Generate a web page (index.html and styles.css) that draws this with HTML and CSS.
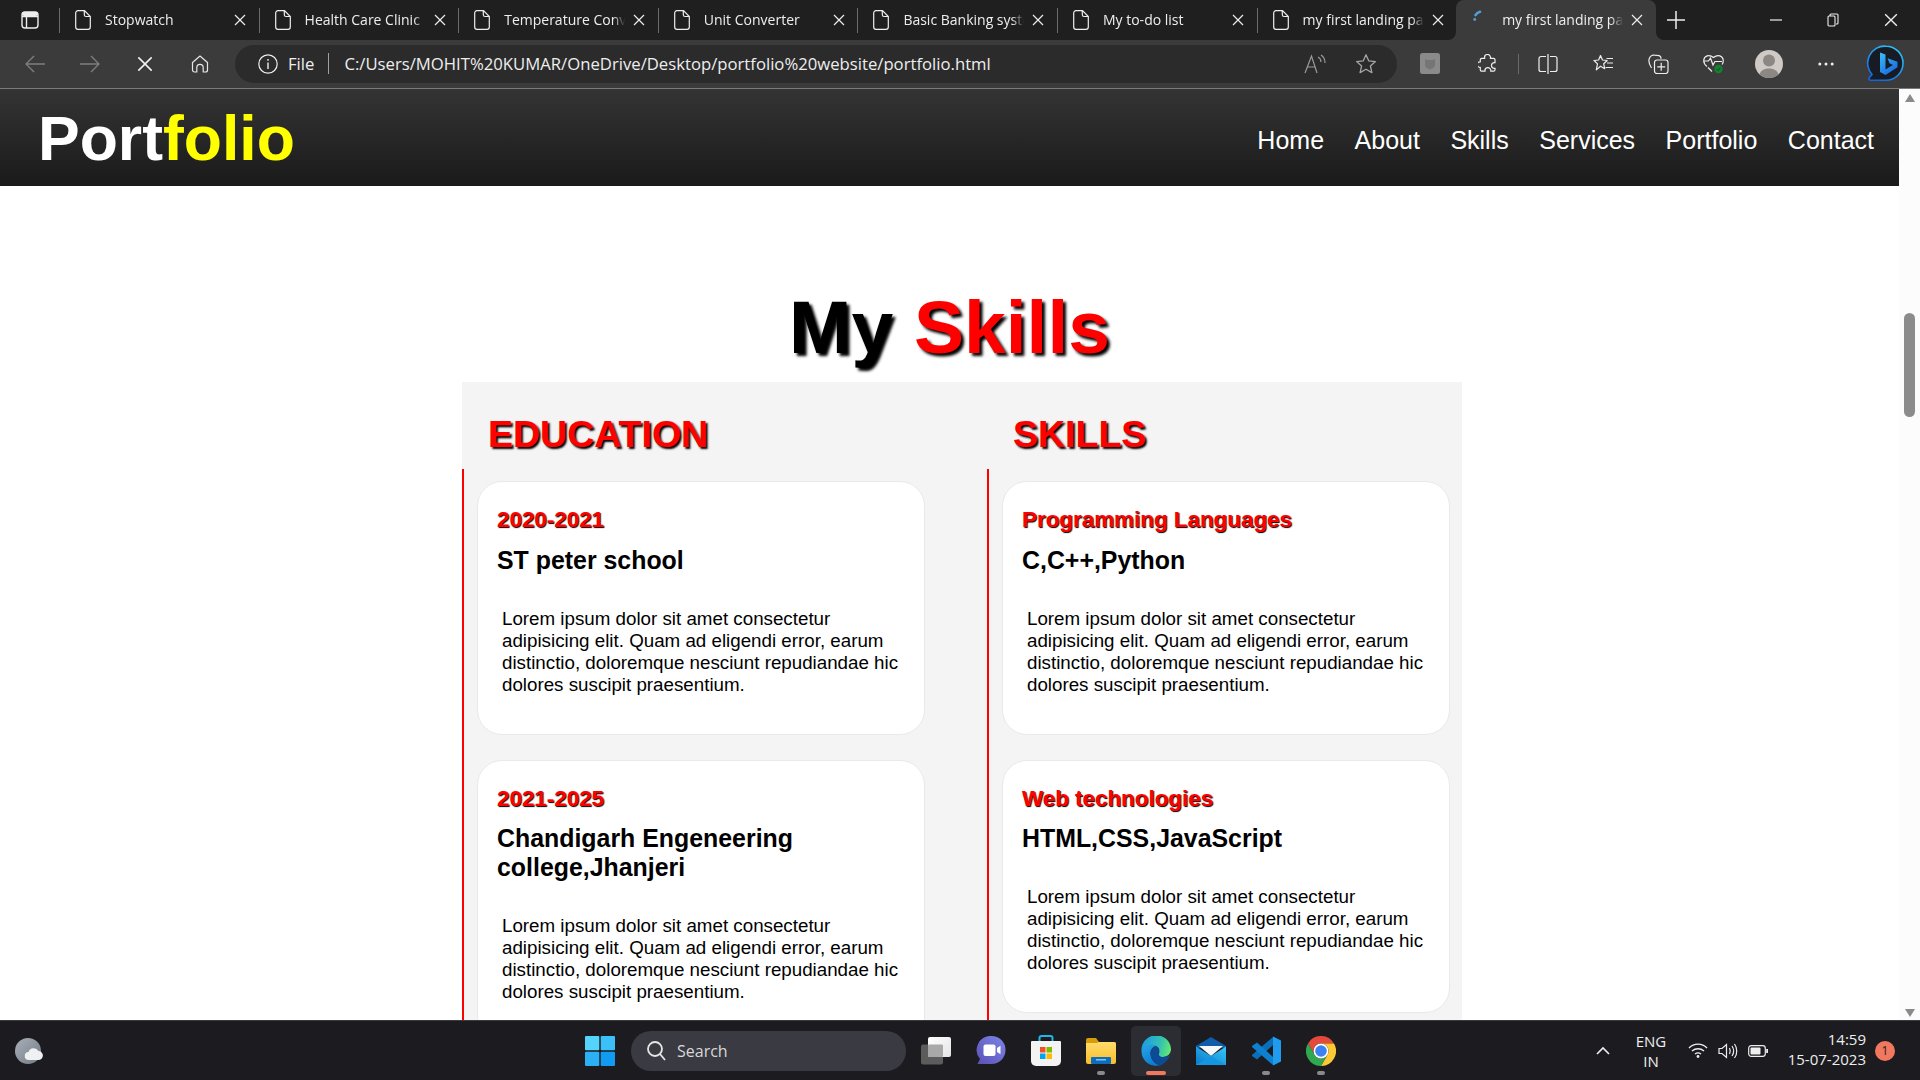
FILE: index.html
```html
<!DOCTYPE html>
<html lang="en">
<head>
    <meta charset="UTF-8">
    <meta name="viewport" content="width=device-width, initial-scale=1.0">
    <title>my first landing page</title>
    <link rel="stylesheet" href="styles.css">
</head>
<body>
    <svg class="defs" xmlns="http://www.w3.org/2000/svg">
        <symbol id="file" viewBox="0 0 16 20"><path d="M3 .7h6.500l5.800 5.800V17a2.300 2.300 0 0 1-2.300 2.300H3A2.300 2.300 0 0 1 .7 17V3A2.300 2.300 0 0 1 3 .7zM9.300 1v3.700a1.800 1.800 0 0 0 1.800 1.800H15" fill="none" stroke="currentColor" stroke-width="1.200"/></symbol>
        <symbol id="cross" viewBox="0 0 12 12"><path d="M1 1l10 10M11 1L1 11" fill="none" stroke="currentColor" stroke-width="1.200"/></symbol>
    </svg>

    <!-- browser tabs -->
    <div class="tabstrip">
        <div class="tabstrip-btn">
            <svg width="18" height="18" viewBox="0 0 18 18"><rect x="1" y="1" width="16" height="16" rx="3" fill="none" stroke="#eee" stroke-width="1.400"/><path d="M1 5.500h16M5.500 5.500V17" stroke="#eee" stroke-width="1.400"/><rect x="1" y="1" width="16" height="4" rx="2" fill="#eee"/></svg>
        </div>
        <div class="tab"><svg class="tab-icon"><use href="#file"/></svg><span class="tab-title">Stopwatch</span><svg class="tab-close"><use href="#cross"/></svg></div>
        <div class="tab"><svg class="tab-icon"><use href="#file"/></svg><span class="tab-title">Health Care Clinic</span><svg class="tab-close"><use href="#cross"/></svg></div>
        <div class="tab"><svg class="tab-icon"><use href="#file"/></svg><span class="tab-title">Temperature Converter</span><svg class="tab-close"><use href="#cross"/></svg></div>
        <div class="tab"><svg class="tab-icon"><use href="#file"/></svg><span class="tab-title">Unit Converter</span><svg class="tab-close"><use href="#cross"/></svg></div>
        <div class="tab"><svg class="tab-icon"><use href="#file"/></svg><span class="tab-title">Basic Banking system</span><svg class="tab-close"><use href="#cross"/></svg></div>
        <div class="tab"><svg class="tab-icon"><use href="#file"/></svg><span class="tab-title">My to-do list</span><svg class="tab-close"><use href="#cross"/></svg></div>
        <div class="tab"><svg class="tab-icon"><use href="#file"/></svg><span class="tab-title">my first landing page</span><svg class="tab-close"><use href="#cross"/></svg></div>
        <div class="tab tab-active">
            <svg class="tab-icon" viewBox="0 0 16 20"><path d="M3.500 5.200C4.500 3.500 6 2.400 8 1.800" fill="none" stroke="#4f9fd6" stroke-width="2.600" stroke-linecap="round"/><circle cx="2.700" cy="9.500" r="1.400" fill="#4f9fd6"/></svg>
            <span class="tab-title">my first landing page</span><svg class="tab-close"><use href="#cross"/></svg>
        </div>
        <svg class="new-tab" width="20" height="20" viewBox="0 0 20 20"><path d="M10 1v18M1 10h18" stroke="#eee" stroke-width="1.500"/></svg>
        <div class="window-btns">
            <svg width="12" height="12" viewBox="0 0 12 12"><path d="M0 6h12" stroke="#eee" stroke-width="1.200"/></svg>
            <svg width="12" height="14" viewBox="0 0 12 14"><path d="M3 3V2a1 1 0 0 1 1-1h6a1 1 0 0 1 1 1v8a1 1 0 0 1-1 1H9M2 3h5a1 1 0 0 1 1 1v8a1 1 0 0 1-1 1H2a1 1 0 0 1-1-1V4a1 1 0 0 1 1-1z" fill="none" stroke="#eee" stroke-width="1.100"/></svg>
            <svg width="14" height="14" viewBox="0 0 12 12"><use href="#cross" color="#eee"/></svg>
        </div>
    </div>

    <!-- address bar -->
    <div class="toolbar">
        <div class="nav-btns">
            <svg width="20" height="18" viewBox="0 0 20 18"><path d="M20 9H1M9 1L1 9l8 8" fill="none" stroke="#7f7f7f" stroke-width="1.300"/></svg>
            <svg width="20" height="18" viewBox="0 0 20 18"><path d="M0 9h19M11 1l8 8-8 8" fill="none" stroke="#7f7f7f" stroke-width="1.300"/></svg>
            <svg width="16" height="16" viewBox="0 0 12 12"><use href="#cross" color="#f0f0f0"/></svg>
            <svg width="18" height="18" viewBox="0 0 18 18"><path d="M1.500 7.500L9 1l7.500 6.500V15a2 2 0 0 1-2 2h-2.300v-4.500a3.200 3.200 0 0 0-6.400 0V17H3.500a2 2 0 0 1-2-2z" fill="none" stroke="#e6e6e6" stroke-width="1.200" stroke-linejoin="round"/></svg>
        </div>
        <div class="addressbar">
            <svg width="20" height="20" viewBox="0 0 20 20"><circle cx="10" cy="10" r="9.200" fill="none" stroke="#eee" stroke-width="1.200"/><path d="M10 8.500V15M10 5v1.800" stroke="#eee" stroke-width="1.400"/></svg>
            <span class="addr-file">File</span>
            <span class="addr-sep"></span>
            <span class="addr-url">C:/Users/MOHIT%20KUMAR/OneDrive/Desktop/portfolio%20website/portfolio.html</span>
            <svg class="addr-read" width="22" height="20" viewBox="0 0 22 20"><path d="M1 19L7.500 2 13 19M3.500 13h8M14 3c2 1 3 3 3 5M17 1c3 2 4 5 4 8" fill="none" stroke="#9a9a9a" stroke-width="1.200"/></svg>
            <svg class="addr-star" width="22" height="22" viewBox="0 0 22 22"><path d="M11 1.800l2.800 6.100 6.600.7-5 4.400 1.500 6.600-5.900-3.400-5.900 3.400 1.500-6.600-5-4.400 6.600-.7z" fill="none" stroke="#a5a5a5" stroke-width="1.300" stroke-linejoin="round"/></svg>
        </div>
        <div class="tool-icons">
            <span class="tool-slot tool-slot-wide">
                <svg width="20" height="21" viewBox="0 0 20 21"><rect width="20" height="21" rx="2.500" fill="#8a8a8a"/><path d="M5 6l2.500 1h5L15 6v6c0 2-2.500 3.500-5 4.500C7.500 15.500 5 14 5 12z" fill="#757575"/></svg>
            </span>
            <span class="tool-slot tool-slot-wide">
                <svg width="19" height="20" viewBox="0 0 19 20"><path d="M6.500 3.500a3 3 0 0 1 6 0l-.2.800h3.200a1.500 1.500 0 0 1 1.500 1.500v3l-.6-.2a2.900 2.900 0 0 0 0 5.800l.6-.2v1.500a1.500 1.500 0 0 1-1.500 1.500h-2.800l.2-.5a3 3 0 0 0-6 0l.2.500H3.800a1.500 1.500 0 0 1-1.500-1.500v-2.400l-.3.100a2.800 2.800 0 0 1 0-5.600l.3.100V5.800a1.500 1.500 0 0 1 1.500-1.500h3z" fill="none" stroke="#eee" stroke-width="1.200" stroke-linejoin="round"/></svg>
            </span>
            <span class="tool-sep"></span>
            <span class="tool-slot">
                <svg width="20" height="20" viewBox="0 0 20 20"><path d="M8 2.500H3a2 2 0 0 0-2 2v11a2 2 0 0 0 2 2h5M12 2.500h5a2 2 0 0 1 2 2v11a2 2 0 0 1-2 2h-5M10 0v20" fill="none" stroke="#eee" stroke-width="1.200"/></svg>
            </span>
            <span class="tool-slot">
                <svg width="21" height="20" viewBox="0 0 21 20"><path d="M7.500 1.500l2 4.500 4.700.5-3.500 3.300 1 4.900-4.200-2.500-4.200 3.700 1.200-6L1 6.500 5.600 6z" fill="none" stroke="#eee" stroke-width="1.200" stroke-linejoin="round"/><path d="M13.500 4.500H20M14 9h6M12.500 13.500H20" stroke="#eee" stroke-width="1.200"/></svg>
            </span>
            <span class="tool-slot">
                <svg width="21" height="20" viewBox="0 0 21 20"><path d="M3.500 14C1.500 11 .5 8.500 1 5.500 1.500 3 3 1.500 5 1l6 .7c1.500.3 2 1.500 2 3" fill="none" stroke="#eee" stroke-width="1.200"/><rect x="6.500" y="6" width="13.500" height="13.500" rx="2.500" fill="#3b3b3b" stroke="#eee" stroke-width="1.200"/><path d="M13.200 8.800v8M9.200 12.800h8" stroke="#eee" stroke-width="1.200"/></svg>
            </span>
            <span class="tool-slot">
                <svg width="21" height="21" viewBox="0 0 21 21"><path d="M4 13.500C1.500 11.500.5 9.500.8 7 1.300 3 6 .8 10.500 4.500 15 .8 19.700 3 20.200 7c.2 1.500-.2 3-1 4.500M1 8h4.500l2-3 2.500 7 2-3.500h7M5 14.500l4 4" fill="none" stroke="#eee" stroke-width="1.200"/><circle cx="15.500" cy="16" r="4.200" fill="#15802f"/><path d="M13.500 16l1.500 1.500 2.500-2.800" fill="none" stroke="#0c4a1c" stroke-width="1"/></svg>
            </span>
            <span class="tool-slot tool-slot-wide">
                <svg width="28" height="28" viewBox="0 0 28 28"><circle cx="14" cy="14" r="14" fill="#cfcac5"/><circle cx="14" cy="10.500" r="6" fill="#8c8782"/><path d="M4.500 24.300C6 20 10 18.500 14 18.500s8 1.500 9.500 5.800a14 14 0 0 1-19 0z" fill="#8c8782"/></svg>
            </span>
            <span class="tool-slot tool-slot-wide">
                <svg width="16" height="4" viewBox="0 0 16 4"><circle cx="1.800" cy="2" r="1.500" fill="#eee"/><circle cx="8" cy="2" r="1.500" fill="#eee"/><circle cx="14.200" cy="2" r="1.500" fill="#eee"/></svg>
            </span>
            <span class="tool-slot tool-slot-bing">
                <svg width="38" height="38" viewBox="0 0 38 38">
                    <defs>
                        <linearGradient id="bingRing" x1="0.800" y1="0" x2="0.200" y2="1"><stop offset="0" stop-color="#2fc3f7"/><stop offset="1" stop-color="#1462e0"/></linearGradient>
                        <linearGradient id="bingB" x1="0.200" y1="0" x2="0.800" y2="1"><stop offset="0" stop-color="#39b8f5"/><stop offset="1" stop-color="#1565e0"/></linearGradient>
                    </defs>
                    <path d="M20 1.200a17 17 0 0 1 0 34H4.500a1.500 1.500 0 0 1-1.200-2.400l2.700-3.300A17 17 0 0 1 20 1.200z" fill="#171b24" stroke="url(#bingRing)" stroke-width="1.600"/>
                    <path d="M14 7.500l5.500 2v15l7.500-4.500-3.500-1.700-2-5 10 3.500v5.500L19.500 30 14 27z" fill="url(#bingB)"/>
                </svg>
            </span>
        </div>
    </div>

    <div class="viewport">
        <div class="page">
            <header class="navbar">
                <a class="logo">Port<span>folio</span></a>
                <nav class="menu">
                    <a>Home</a>
                    <a>About</a>
                    <a>Skills</a>
                    <a>Services</a>
                    <a>Portfolio</a>
                    <a>Contact</a>
                </nav>
            </header>

            <section class="skills">
                <h1 class="skills-title">My <span>Skills</span></h1>
                <div class="panel">
                    <div class="column">
                        <h2>EDUCATION</h2>
                        <div class="timeline">
                            <div class="card">
                                <h3>2020-2021</h3>
                                <h4>ST peter school</h4>
                                <p>Lorem ipsum dolor sit amet consectetur adipisicing elit. Quam ad eligendi error, earum distinctio, doloremque nesciunt repudiandae hic dolores suscipit praesentium.</p>
                            </div>
                            <div class="card">
                                <h3>2021-2025</h3>
                                <h4>Chandigarh Engeneering college,Jhanjeri</h4>
                                <p>Lorem ipsum dolor sit amet consectetur adipisicing elit. Quam ad eligendi error, earum distinctio, doloremque nesciunt repudiandae hic dolores suscipit praesentium.</p>
                            </div>
                        </div>
                    </div>
                    <div class="column">
                        <h2>SKILLS</h2>
                        <div class="timeline">
                            <div class="card">
                                <h3>Programming Languages</h3>
                                <h4>C,C++,Python</h4>
                                <p>Lorem ipsum dolor sit amet consectetur adipisicing elit. Quam ad eligendi error, earum distinctio, doloremque nesciunt repudiandae hic dolores suscipit praesentium.</p>
                            </div>
                            <div class="card">
                                <h3>Web technologies</h3>
                                <h4>HTML,CSS,JavaScript</h4>
                                <p>Lorem ipsum dolor sit amet consectetur adipisicing elit. Quam ad eligendi error, earum distinctio, doloremque nesciunt repudiandae hic dolores suscipit praesentium.</p>
                            </div>
                        </div>
                    </div>
                </div>
            </section>
        </div>
        <div class="scrollbar">
            <span class="arrow-up"></span>
            <span class="thumb"></span>
            <span class="arrow-down"></span>
        </div>
    </div>

    <!-- windows taskbar -->
    <footer class="taskbar">
        <svg class="widgets" width="28" height="26" viewBox="0 0 28 26">
            <defs><linearGradient id="moon" x1="0" y1="0" x2="1" y2="1"><stop offset="0" stop-color="#a9b0b8"/><stop offset="1" stop-color="#727a84"/></linearGradient></defs>
            <circle cx="13" cy="13" r="13" fill="url(#moon)"/>
            <path d="M15.500 25a4 4 0 0 1-.5-8 5.500 5.500 0 0 1 10-1 4.500 4.500 0 0 1-.2 9z" fill="#eef0f2" transform="translate(-1.500 -3)"/>
        </svg>
        <svg class="start" width="30" height="30" viewBox="0 0 30 30"><rect width="14.300" height="14.300" rx="1" fill="#55d4fb"/><rect x="15.700" width="14.300" height="14.300" rx="1" fill="#3cc0f8"/><rect y="15.700" width="14.300" height="14.300" rx="1" fill="#2bb0f6"/><rect x="15.700" y="15.700" width="14.300" height="14.300" rx="1" fill="#119cf2"/></svg>
        <div class="search">
            <svg width="20" height="22" viewBox="0 0 20 22"><circle cx="9" cy="9" r="7" fill="none" stroke="#e6e6e6" stroke-width="1.800"/><path d="M14 14l5 6" stroke="#e6e6e6" stroke-width="1.800"/></svg>
            <span>Search</span>
        </div>
        <div class="apps">
            <div class="app">
                <svg width="30" height="28" viewBox="0 0 30 28">
                    <defs><linearGradient id="viewFront" x1="0" y1="0" x2="1" y2="1"><stop offset="0" stop-color="#fff"/><stop offset="1" stop-color="#e4e4e4"/></linearGradient></defs>
                    <rect y="7.500" width="22" height="20" rx="2" fill="#5c5c5c"/>
                    <rect x="7" width="23" height="20" rx="2" fill="url(#viewFront)"/>
                    <rect x="7" y="7.500" width="15" height="12.500" rx="1" fill="#a8a8a8"/>
                </svg>
            </div>
            <div class="app">
                <svg width="30" height="29" viewBox="0 0 30 29">
                    <defs><linearGradient id="chat" x1="0" y1="1" x2="1" y2="0"><stop offset="0" stop-color="#5b4fb5"/><stop offset="1" stop-color="#7d86e8"/></linearGradient></defs>
                    <path d="M15.500 0a14 14 0 0 1 0 28H1.500l2.500-5A14 14 0 0 1 15.500 0z" fill="url(#chat)"/>
                    <rect x="7.500" y="8.500" width="12" height="11.500" rx="2" fill="#fff"/>
                    <path d="M21 12l3.500-2.200v8.400L21 16z" fill="#fff"/>
                </svg>
            </div>
            <div class="app">
                <svg width="30" height="31" viewBox="0 0 30 31">
                    <path d="M8.500 8V3a2 2 0 0 1 2-2h9a2 2 0 0 1 2 2v5" fill="none" stroke="#1fb6e8" stroke-width="2"/>
                    <path d="M1 6h28a1 1 0 0 1 1 1v19a5 5 0 0 1-5 5H5a5 5 0 0 1-5-5V7a1 1 0 0 1 1-1z" fill="#f3f3f3"/>
                    <rect x="9" y="12" width="5.500" height="5.500" fill="#f25022"/><rect x="15.500" y="12" width="5.500" height="5.500" fill="#7fba00"/><rect x="9" y="18.500" width="5.500" height="5.500" fill="#00a4ef"/><rect x="15.500" y="18.500" width="5.500" height="5.500" fill="#ffb900"/>
                </svg>
            </div>
            <div class="app app-open">
                <svg width="30" height="26" viewBox="0 0 30 26">
                    <defs><linearGradient id="folder" x1="0" y1="0" x2="0" y2="1"><stop offset="0" stop-color="#ffdc6b"/><stop offset="1" stop-color="#f6bd2a"/></linearGradient></defs>
                    <path d="M0 2a2 2 0 0 1 2-2h8l3 4h15a2 2 0 0 1 2 2v3H0z" fill="#d79c0b"/>
                    <path d="M0 5h11l2-1h15a2 2 0 0 1 2 2v18a2 2 0 0 1-2 2H2a2 2 0 0 1-2-2z" fill="url(#folder)"/>
                    <rect x="5" y="19" width="20" height="7" rx="1" fill="#0f6cbd"/><rect x="10" y="21" width="10" height="1.500" fill="#7fc4f0"/>
                </svg>
            </div>
            <div class="app app-active">
                <svg width="30" height="30" viewBox="0 0 30 30">
                    <defs>
                        <linearGradient id="edgeTop" x1="0" y1="0.500" x2="1" y2="0.700"><stop offset="0" stop-color="#1b9de2"/><stop offset="0.600" stop-color="#35c1b0"/><stop offset="1" stop-color="#66eb6e"/></linearGradient>
                        <linearGradient id="edgeLeft" x1="0" y1="0" x2="0.500" y2="1"><stop offset="0" stop-color="#26a6e8"/><stop offset="1" stop-color="#0e7dd0"/></linearGradient>
                    </defs>
                    <path d="M0.500 15A14.500 14.500 0 0 1 30 13c0 5-4 8-8.500 8-3 0-4.500-1.500-3.500-3.500 1-2.500-1-6.500-3-7.500C8 8 2.500 12 .5 15z" fill="url(#edgeTop)"/>
                    <path d="M.5 15C2.500 10 10 7 16 10c-4 0-7 4-6.500 8 .5 6 5.500 10 10 11A14.500 14.500 0 0 1 .5 15z" fill="url(#edgeLeft)"/>
                    <path d="M9.500 18c0-5 3.500-7.500 6.500-7.500 2 1 3 3.500 2 6.500-1 2 1 4 4 4 3 0 5.500-1 7-2-2 6-7 10-10.500 10.500C13 28 9.500 23 9.500 18z" fill="#0c4a95"/>
                </svg>
            </div>
            <div class="app">
                <svg width="30" height="28" viewBox="0 0 30 28">
                    <defs><linearGradient id="mailBody" x1="0" y1="1" x2="1" y2="0"><stop offset="0" stop-color="#0a78cc"/><stop offset="1" stop-color="#38c8f7"/></linearGradient></defs>
                    <path d="M15 0l15 9v2H0V9z" fill="#0f5ca8"/>
                    <path d="M3 9h24l-12 10z" fill="#f5f7f9"/>
                    <path d="M0 9.500L15 19 30 9.500V28H0z" fill="url(#mailBody)"/>
                    <path d="M0 28l15-9 15 9z" fill="#1397e0"/>
                </svg>
            </div>
            <div class="app app-open">
                <svg width="30" height="30" viewBox="0 0 30 30">
                    <path d="M22 1v8L6 23.500 1 20v-1z" fill="#0b6fb8"/>
                    <path d="M1 11v-1l5-3.500L22 21v8z" fill="#0f80d0"/>
                    <path d="M22 .5L30 4.500v21L22 29.500z" fill="#1f9cf0"/>
                </svg>
            </div>
            <div class="app app-open">
                <svg width="30" height="30" viewBox="0 0 30 30">
                    <path d="M15 7.500h13a15 15 0 0 0-26 0L8.500 18.750A7.500 7.500 0 0 1 15 7.500z" fill="#e5493a"/>
                    <path d="M15 7.500h13a15 15 0 0 0-26 0L8.500 18.750A7.500 7.500 0 0 1 15 7.500z" fill="#fcc934" transform="rotate(120 15 15)"/>
                    <path d="M15 7.500h13a15 15 0 0 0-26 0L8.500 18.750A7.500 7.500 0 0 1 15 7.500z" fill="#2fa84f" transform="rotate(240 15 15)"/>
                    <circle cx="15" cy="15" r="7.500" fill="#fff"/>
                    <circle cx="15" cy="15" r="5.800" fill="#3b82f0"/>
                </svg>
            </div>
        </div>
        <div class="tray">
            <svg class="tray-chevron" width="14" height="9" viewBox="0 0 14 9"><path d="M1 8l6-6 6 6" fill="none" stroke="#eee" stroke-width="1.600"/></svg>
            <div class="tray-lang">ENG<br>IN</div>
            <svg width="20" height="15" viewBox="0 0 20 15"><path d="M1 5c5-5.200 13-5.200 18 0M4 8c3.500-3 8.500-3 12 0M7 11c2-1.500 4-1.500 6 0" fill="none" stroke="#eee" stroke-width="1.400"/><circle cx="10" cy="13.500" r="1.400" fill="#eee"/></svg>
            <svg width="20" height="16" viewBox="0 0 20 16"><path d="M1 5.500h3l4.500-4v13L4 10.500H1zM11.500 5c1 2 1 4 0 6M14 3c2 3 2 7 0 10M16.500 1c3 4 3 10 0 14" fill="none" stroke="#eee" stroke-width="1.200"/></svg>
            <svg width="20" height="12" viewBox="0 0 20 12"><rect x=".7" y=".7" width="16.600" height="10.600" rx="2.500" fill="none" stroke="#eee" stroke-width="1.200"/><rect x="2.500" y="2.500" width="10" height="7" rx="1" fill="#eee"/><rect x="18.200" y="4" width="1.800" height="4" fill="#eee"/></svg>
            <div class="tray-clock">14:59<br>15-07-2023</div>
            <span class="tray-badge">1</span>
        </div>
    </footer>
</body>
</html>
```
FILE: styles.css
```css
* {
    box-sizing: border-box;
}
body {
    margin: 0;
    height: 100vh;
    display: flex;
    flex-direction: column;
    overflow: hidden;
    background: #fff;
    font-family: 'Liberation Sans', Arial, sans-serif;
}
.defs {
    display: none;
}

/* browser chrome */
.tabstrip {
    height: 40px;
    display: flex;
    align-items: center;
    background: #1f1f1f;
    color: #eee;
    font-family: 'Open Sans', sans-serif;
    font-size: 14px;
}
.tabstrip-btn {
    width: 59px;
    flex: none;
    display: flex;
    align-items: center;
    padding-left: 21px;
}
.tab {
    position: relative;
    flex: none;
    width: 199.6px;
    height: 40px;
    display: flex;
    align-items: center;
    padding-left: 16px;
}
.tab::before {
    content: "";
    position: absolute;
    left: 0;
    top: 8px;
    height: 25px;
    border-left: 1px solid #6b6b6b;
}
.tab-icon {
    width: 16px;
    height: 20px;
    flex: none;
}
.tab-title {
    width: 121px;
    flex: none;
    margin: -2px 0 0 14px;
    white-space: nowrap;
    overflow: hidden;
    -webkit-mask-image: linear-gradient(to right, #000 90%, transparent);
    mask-image: linear-gradient(to right, #000 90%, transparent);
}
.tab-close {
    width: 12px;
    height: 12px;
    margin-left: 8px;
    flex: none;
}
.tab-active {
    background: #3b3b3b;
    border-radius: 8px 8px 0 0;
}
.tab-active::before, .tab-active::after {
    content: "";
    position: absolute;
    top: auto;
    bottom: 0;
    width: 8px;
    height: 8px;
    border: 0;
}
.tab-active::before {
    left: -8px;
    background: radial-gradient(circle at 0 0, #1f1f1f 7.5px, #3b3b3b 8.5px);
}
.tab-active::after {
    right: -8px;
    background: radial-gradient(circle at 100% 0, #1f1f1f 7.5px, #3b3b3b 8.5px);
}
.new-tab {
    margin-left: 10px;
    flex: none;
}
.window-btns {
    margin-left: auto;
    width: 160px;
    height: 40px;
    padding: 0 22px 0 10px;
    display: flex;
    align-items: center;
    justify-content: space-between;
}
.toolbar {
    height: 49px;
    display: flex;
    align-items: center;
    background: #3b3b3b;
    border-bottom: 1px solid #7a7a7a;
    padding-bottom: 1px;
}
.nav-btns {
    width: 235px;
    flex: none;
    padding-left: 7.5px;
    display: grid;
    grid-template-columns: repeat(4, 55px);
    justify-items: center;
    align-items: center;
}
.addressbar {
    width: 1162px;
    flex: none;
    height: 38px;
    display: flex;
    align-items: center;
    padding-left: 23px;
    background: #2b2b2b;
    border-radius: 19px;
    color: #eee;
    font-family: 'Open Sans', sans-serif;
    font-size: 16.7px;
}
.addr-file {
    margin-left: 10px;
}
.addr-sep {
    height: 21px;
    margin: 0 15px 0 14px;
    border-left: 1px solid #a0a0a0;
}
.addr-read {
    margin-left: auto;
}
.addr-star {
    margin: 0 20px 0 29px;
}
.tool-icons {
    flex: 1;
    display: flex;
    align-items: center;
    padding-left: 4.5px;
}
.tool-slot {
    width: 55px;
    flex: none;
    display: flex;
    align-items: center;
    justify-content: center;
}
.tool-slot-wide {
    width: 57px;
}
.tool-slot-bing {
    width: 61px;
}
.tool-sep {
    height: 20px;
    margin: 0 2px;
    border-left: 1px solid #6a6a6a;
}

/* page */
.viewport {
    flex: 1;
    min-height: 0;
    display: flex;
    background: #fff;
}
.page {
    flex: 1;
    min-width: 0;
    overflow: hidden;
}
.scrollbar {
    width: 21px;
    display: flex;
    flex-direction: column;
    align-items: center;
    background: #fcfcfc;
    padding: 5px 0 3px;
}
.arrow-up, .arrow-down {
    width: 0;
    height: 0;
    border-left: 5.5px solid transparent;
    border-right: 5.5px solid transparent;
}
.arrow-up {
    border-bottom: 8px solid #8a8a8a;
}
.arrow-down {
    border-top: 8px solid #8a8a8a;
    margin-top: auto;
}
.thumb {
    width: 11px;
    height: 104px;
    margin-top: 211px;
    border-radius: 6px;
    background: #8b8b8b;
}
.navbar {
    height: 97px;
    padding: 0 25px 0 38px;
    display: flex;
    align-items: center;
    justify-content: space-between;
    background: linear-gradient(to bottom, #343434, #1a1a1a);
}
.logo {
    color: #fff;
    font-size: 62.5px;
    font-weight: bold;
}
.logo span {
    color: #ff0;
}
.menu {
    display: flex;
    gap: 30.5px;
    margin-top: 6px;
}
.menu a {
    color: #fff;
    font-size: 25px;
}
.skills-title {
    margin: 98px 0 12px;
    text-align: center;
    font-size: 75px;
    line-height: 86px;
    color: #000;
    text-shadow: 3px 3px 3px #000;
}
.skills-title span {
    color: #f00;
}
.panel {
    width: 1000px;
    margin-left: 462px;
    padding: 31px 12px 0 0;
    display: grid;
    grid-template-columns: 462px 462px;
    gap: 63px;
    background: #f4f4f4;
}
.column h2 {
    margin: 0 0 13px 26px;
    font-size: 37.5px;
    line-height: 43px;
    color: #f00;
    text-shadow: 2px 2px 2px #000;
}
.timeline {
    height: 100%;
    display: flex;
    flex-direction: column;
    gap: 25px;
    border-left: 2px solid #f00;
    padding: 12px 0 27px 13px;
}
.card {
    width: 448px;
    padding: 25px 18px 38px 19px;
    background: #fff;
    border: 1px solid #e9e9e9;
    border-radius: 25px;
}
.card h3 {
    margin: 0 0 13.5px;
    font-size: 22.4px;
    line-height: 25px;
    color: #f00;
    text-shadow: 1px 1px 1px #000;
}
.card h4 {
    margin: 0;
    font-size: 24.9px;
    line-height: 29px;
    color: #000;
}
.card p {
    margin: 33px 0 0 5px;
    font-size: 18.75px;
    line-height: 22px;
    color: #000;
}

/* taskbar */
.taskbar {
    height: 60px;
    flex: none;
    display: flex;
    align-items: center;
    background: #1c1c20;
    border-top: 1px solid #3a3a3a;
    color: #eee;
    font-family: 'Open Sans', sans-serif;
}
.widgets {
    margin-left: 15px;
    flex: none;
}
.start {
    margin-left: 542px;
    flex: none;
}
.search {
    width: 275px;
    flex: none;
    height: 40px;
    margin-left: 16px;
    padding-left: 15px;
    display: flex;
    align-items: center;
    gap: 11px;
    background: #3a3a42;
    border-radius: 20px;
    font-size: 16px;
    color: #d8d8d8;
}
.apps {
    display: flex;
    flex: none;
    margin-left: 2px;
}
.app {
    position: relative;
    width: 55px;
    height: 50px;
    display: flex;
    align-items: center;
    justify-content: center;
}
.app-open::after, .app-active::after {
    content: "";
    position: absolute;
    left: 50%;
    bottom: 1px;
    margin-left: -4px;
    width: 8px;
    height: 4px;
    border-radius: 2px;
    background: #8a8a8a;
}
.app-active {
    width: 50px;
    margin: 0 2.5px;
    background: #2c2c33;
    border-radius: 5px;
}
.app-active::after {
    width: 20px;
    margin-left: -10px;
    background: #f0785f;
}
.tray {
    flex: 1;
    display: flex;
    align-items: center;
    padding-left: 248px;
    font-size: 15px;
}
.tray > svg {
    margin-right: 10px;
    flex: none;
}
.tray .tray-chevron {
    margin-right: 0;
}
.tray-lang {
    width: 40px;
    margin: 0 17px 0 21px;
    text-align: center;
    line-height: 20px;
}
.tray-clock {
    margin: -3px 0 0 auto;
    text-align: right;
    line-height: 20px;
}
.tray-badge {
    width: 20px;
    height: 20px;
    flex: none;
    margin: 0 25px 0 9px;
    border-radius: 50%;
    background: #f0785f;
    color: #222;
    font-size: 12px;
    line-height: 20px;
    text-align: center;
}
```
